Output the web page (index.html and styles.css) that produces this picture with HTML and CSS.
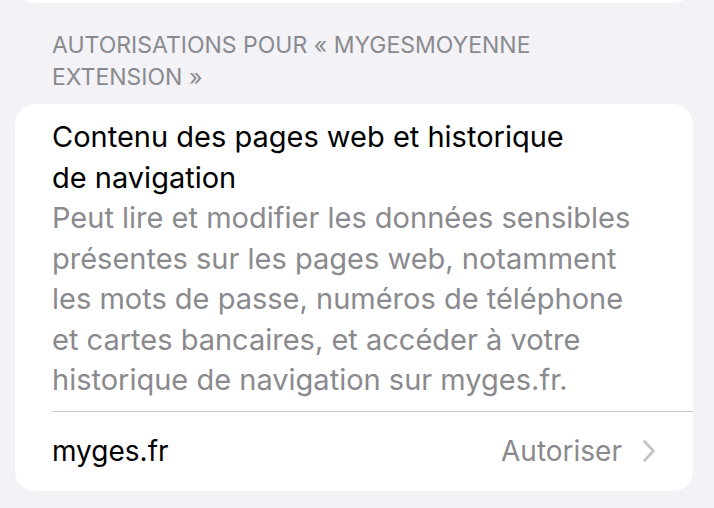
FILE: index.html
```
<!DOCTYPE html>
<html lang="fr">
<head>
<meta charset="utf-8">
<link rel="stylesheet" href="styles.css">
</head>
<body>
<div class="screen">
  <div class="prev-card"></div>
  <div class="section-header">AUTORISATIONS POUR « MYGESMOYENNE EXTENSION »</div>
  <div class="card">
    <div class="info">
      <div class="title">Contenu des pages web et historique de navigation</div>
      <div class="desc">Peut lire et modifier les données sensibles présentes sur les pages web, notamment les mots de passe, numéros de téléphone et cartes bancaires, et accéder à votre historique de navigation sur myges.fr.</div>
    </div>
    <div class="row">
      <span class="row-label">myges.fr</span>
      <span class="row-value">Autoriser</span>
      <svg class="chevron" width="14" height="24" viewBox="0 0 14 24"><path d="M2.5 2.5 L11.5 12 L2.5 21.5" fill="none" stroke="#c4c4c7" stroke-width="2.6" stroke-linecap="round" stroke-linejoin="round"/></svg>
    </div>
  </div>
</div>
</body>
</html>
```
FILE: styles.css
```
html, body {
  margin: 0;
  padding: 0;
  background: #f2f2f7;
}
.screen {
  width: 714px;
  height: 508px;
  overflow: hidden;
  font-family: "Inter", "Noto Sans", sans-serif;
  -webkit-font-smoothing: antialiased;
}
.prev-card {
  margin: -20px 21px 0 15px;
  height: 23px;
  background: #fff;
  border-radius: 0 0 20px 20px;
}
.section-header {
  margin: 0 0 0 52px;
  padding-top: 25.75px;
  font-size: 23px;
  line-height: 32.5px;
  color: #8a8a8e;
  max-width: 560px;
}
.card {
  margin: 10.25px 21px 0 15px;
  background: #fff;
  border-radius: 20px;
  padding-left: 37px;
  overflow: hidden;
}
.info {
  padding: 12px 0 10px 0;
  border-bottom: 1px solid #c8c8cc;
}
.title {
  font-size: 29px;
  line-height: 41px;
  color: #000;
  max-width: 545px;
}
.desc {
  font-size: 29px;
  line-height: 40.5px;
  color: #8a8a8e;
  max-width: 595px;
}
.row {
  display: flex;
  align-items: center;
  height: 79px;
  padding-right: 37px;
}
.row-label {
  flex: 1;
  font-size: 28px;
  color: #000;
}
.row-value {
  font-size: 28px;
  color: #8a8a8e;
  margin-right: 20px;
}
.chevron {
  display: block;
}
```
